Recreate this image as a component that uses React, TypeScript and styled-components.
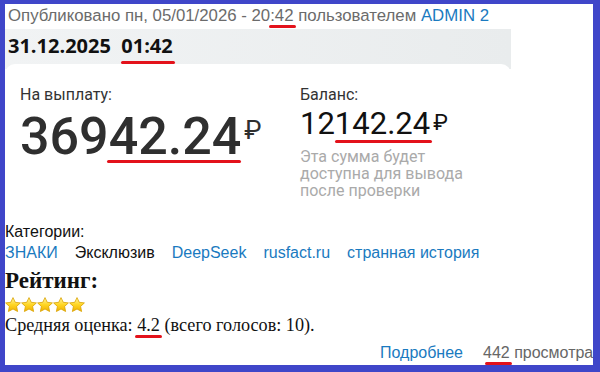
import styled, { createGlobalStyle } from "styled-components";

const GlobalStyle = createGlobalStyle`
  html, body { margin: 0; padding: 0; background: #fff; }
  body { font-family: "Liberation Sans", Arial, sans-serif; }
`;

const Frame = styled.div`
  width: 600px;
  height: 372px;
  box-sizing: border-box;
  border-style: solid;
  border-color: #3f46c9;
  border-width: 4px 7px 7px 5px;
  background: #fff;
  overflow: hidden;
`;

const Meta = styled.div`
  height: 25px;
  padding-left: 3px;
  font-size: 16.8px;
  line-height: 23px;
  color: #6b6b6b;
  white-space: nowrap;
`;

const Link = styled.a`
  color: #1a7ac0;
  text-decoration: none;
`;

const Mark = styled.span<{ $l?: number; $r?: number; $b?: number }>`
  position: relative;
  &::after {
    content: "";
    position: absolute;
    left: ${(p) => p.$l ?? 0}px;
    right: ${(p) => p.$r ?? 0}px;
    bottom: ${(p) => p.$b ?? -4}px;
    height: 3px;
    border-radius: 2px;
    background: #e3121b;
  }
`;

const Post = styled.div`
  width: 506px;
  background: linear-gradient(90deg, #f1f3f4, #e9eced) top / 100% 40px no-repeat;
`;

const DateLine = styled.div`
  height: 35px;
  padding-left: 3px;
  font-family: "Open Sans", sans-serif;
  font-weight: 700;
  font-size: 20px;
  line-height: 34px;
  color: #111;
  white-space: pre;
`;

const Card = styled.div`
  background: #fff;
  border-radius: 10px;
  padding: 20px 15px 24px;
  display: grid;
  grid-template-columns: 280px 1fr;
  font-family: Roboto, sans-serif;
`;

const Col = styled.div`
  display: flex;
  flex-direction: column;
`;

const Label = styled.div`
  font-size: 16px;
  line-height: 22px;
  color: #333;
`;

const Amount = styled.div<{ $big?: boolean }>`
  display: flex;
  align-items: flex-start;
  font-size: ${(p) => (p.$big ? 52 : 31)}px;
  line-height: ${(p) => (p.$big ? 56 : 34)}px;
  font-weight: ${(p) => (p.$big ? 500 : 400)};
  color: ${(p) => (p.$big ? "#2f2f2f" : "#111")};
  margin-top: ${(p) => (p.$big ? 3 : 1)}px;
`;

const Rub = styled.span<{ $big?: boolean }>`
  font-size: ${(p) => (p.$big ? 26 : 22)}px;
  font-weight: 400;
  line-height: 1;
  margin-top: ${(p) => (p.$big ? 8 : 5)}px;
  margin-left: 3px;
`;

const Note = styled.div`
  margin-top: 7px;
  width: 180px;
  font-size: 16px;
  line-height: 17px;
  color: #aaa;
`;

const Section = styled.div`
  font-size: 16px;
  color: #111;
`;

const Cats = styled.div`
  display: flex;
  gap: 17px;
  margin-top: 1px;
  line-height: 22px;
  white-space: nowrap;
`;

const Plain = styled.span`
  color: #111;
`;

const RatingTitle = styled.div`
  font-family: "Liberation Serif", serif;
  font-weight: 700;
  font-size: 23px;
  line-height: 30px;
  margin-top: 2px;
  color: #111;
`;

const Stars = styled.div`
  display: flex;
  height: 18px;
  align-items: center;
`;

const Avg = styled.div`
  font-family: "Liberation Serif", serif;
  font-size: 18.2px;
  line-height: 22px;
  color: #111;
`;

const Footer = styled.div`
  display: flex;
  gap: 20px;
  padding: 7px 0 0 375px;
  font-size: 16px;
  line-height: 20px;
  white-space: nowrap;
`;

const Views = styled.span`
  color: #666;
`;

const Star = () => (
  <svg width="16" height="16" viewBox="0 0 16 16">
    <defs>
      <linearGradient id="sg" x1="0" y1="0" x2="0" y2="1">
        <stop offset="0" stopColor="#fff7a8" />
        <stop offset="0.5" stopColor="#ffd625" />
        <stop offset="1" stopColor="#f0b000" />
      </linearGradient>
    </defs>
    <path
      d="M8 0.6l2.25 4.7 5.15.6-3.8 3.5 1 5.1L8 12l-4.6 2.5 1-5.1L0.6 5.9l5.15-.6z"
      fill="url(#sg)"
      stroke="#d9a200"
      strokeWidth="0.8"
      strokeLinejoin="round"
    />
  </svg>
);

export default function App() {
  return (
    <>
      <GlobalStyle />
      <Frame>
        <Meta>
          Опубликовано пн, 05/01/2026 - 20<Mark $l={-1} $r={-2} $b={-3}>:42</Mark> пользователем{" "}
          <Link>ADMIN 2</Link>
        </Meta>
        <Post>
          <DateLine>
            31.12.2025  <Mark $l={0} $r={-2} $b={-5}>01:42</Mark>
          </DateLine>
          <Card>
            <Col>
              <Label>На выплату:</Label>
              <Amount $big>
                <span>
                  369<Mark $l={-2} $r={0} $b={4}>42.24</Mark>
                </span>
                <Rub $big>₽</Rub>
              </Amount>
            </Col>
            <Col>
              <Label>Баланс:</Label>
              <Amount>
                <span>
                  12<Mark $l={0} $r={-2} $b={-1}>142.24</Mark>
                </span>
                <Rub>₽</Rub>
              </Amount>
              <Note>Эта сумма будет доступна для вывода после проверки</Note>
            </Col>
          </Card>
        </Post>
        <Section>
          <div>Категории:</div>
          <Cats>
            <Link>ЗНАКИ</Link>
            <Plain>Эксклюзив</Plain>
            <Link>DeepSeek</Link>
            <Link>rusfact.ru</Link>
            <Link>странная история</Link>
          </Cats>
          <RatingTitle>Рейтинг:</RatingTitle>
          <Stars>
            {[0, 1, 2, 3, 4].map((i) => (
              <Star key={i} />
            ))}
          </Stars>
          <Avg>
            Средняя оценка: <Mark $l={-2} $r={-2} $b={-3}>4.2</Mark> (всего голосов: 10).
          </Avg>
        </Section>
        <Footer>
          <Link>Подробнее</Link>
          <Views>
            <Mark $l={2} $r={-2} $b={-4}>442</Mark> просмотра
          </Views>
        </Footer>
      </Frame>
    </>
  );
}
